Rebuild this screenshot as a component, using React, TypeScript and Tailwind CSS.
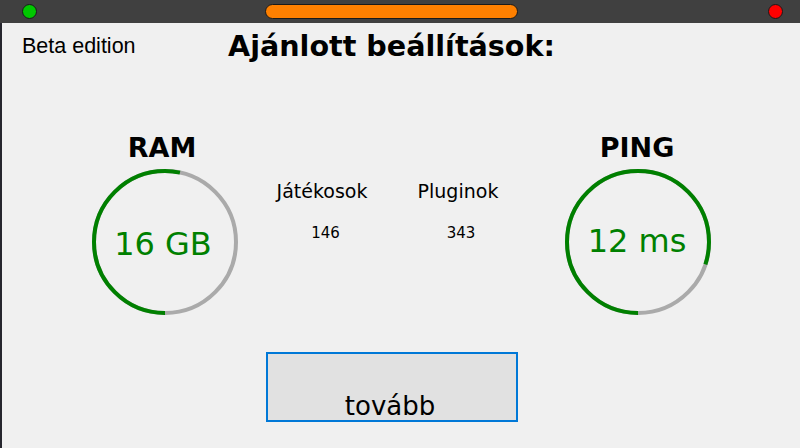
import React from "react";

function Gauge({ value, fraction, textClass }: { value: string; fraction: number; textClass: string }) {
  const r = 71;
  const c = 2 * Math.PI * r;
  return (
    <div className="relative w-[146px] h-[146px] flex items-center justify-center">
      <svg className="absolute inset-0" width="146" height="146" viewBox="0 0 146 146">
        <circle cx="73" cy="73" r={r} fill="none" stroke="#aaaaaa" strokeWidth="4" />
        <circle
          cx="73"
          cy="73"
          r={r}
          fill="none"
          stroke="#008000"
          strokeWidth="4"
          strokeDasharray={`${c * fraction} ${c}`}
          transform="rotate(90 73 73)"
        />
      </svg>
      <span className={`relative text-[32px] leading-none text-[#008000] ${textClass}`}>{value}</span>
    </div>
  );
}

export default function App() {
  return (
    <div className="w-[800px] h-[448px] overflow-hidden bg-[#f0f0f0] font-['DejaVu_Sans',sans-serif] text-black">
      {/* title bar */}
      <div className="h-[23px] bg-[#404040] flex items-center pl-[22px]">
        <div className="w-[15px] h-[15px] rounded-full bg-[#00c800] border border-[#1a1a1a]" />
        <div className="ml-[228px] w-[253px] h-[15px] rounded-full bg-[#ff8000] border border-[#1a1a1a]" />
        <div className="ml-[250px] w-[15px] h-[15px] rounded-full bg-[#ff0000] border border-[#1a1a1a]" />
      </div>

      {/* content */}
      <div className="h-[425px] border-l-2 border-[#26262e]">
        {/* header */}
        <div className="flex items-start pl-[20px]">
          <div className="w-[206px] mt-[13px] text-[21.5px] leading-none font-['Liberation_Sans',Arial,sans-serif]">
            Beta edition
          </div>
          <div className="mt-[9px] text-[28.6px] leading-none font-bold">Ajánlott beállítások:</div>
        </div>

        {/* columns */}
        <div className="mt-[73px] flex items-start pl-[90px]">
          <div className="w-[146px] flex flex-col items-center">
            <div className="text-[27px] leading-none font-bold -translate-x-[3px]">RAM</div>
            <div className="mt-[8px]">
              <Gauge value="16 GB" fraction={0.533} textClass="mt-[4px] -translate-x-[2px]" />
            </div>
          </div>

          <div className="ml-[34px] w-[100px] flex flex-col items-center mt-[48px]">
            <div className="text-[19px] leading-none">Játékosok</div>
            <div className="mt-[25px] pl-[7px] text-[15px] leading-none">146</div>
          </div>

          <div className="ml-[36px] w-[100px] flex flex-col items-center mt-[48px]">
            <div className="text-[19px] leading-none">Pluginok</div>
            <div className="mt-[25px] pl-[6px] text-[15px] leading-none">343</div>
          </div>

          <div className="ml-[57px] w-[146px] flex flex-col items-center">
            <div className="text-[27px] leading-none font-bold -translate-x-[1px]">PING</div>
            <div className="mt-[8px]">
              <Gauge value="12 ms" fraction={0.8} textClass="-mt-[1px] -translate-x-[1px]" />
            </div>
          </div>
        </div>

        {/* button */}
        <div className="mt-[37px] ml-[264px] w-[252px] h-[70px] border-2 border-[#0078d7] bg-[#e1e1e1] flex items-end justify-center pb-[1px]">
          <span className="text-[26px] leading-none -translate-x-[2px]">tovább</span>
        </div>
      </div>
    </div>
  );
}
